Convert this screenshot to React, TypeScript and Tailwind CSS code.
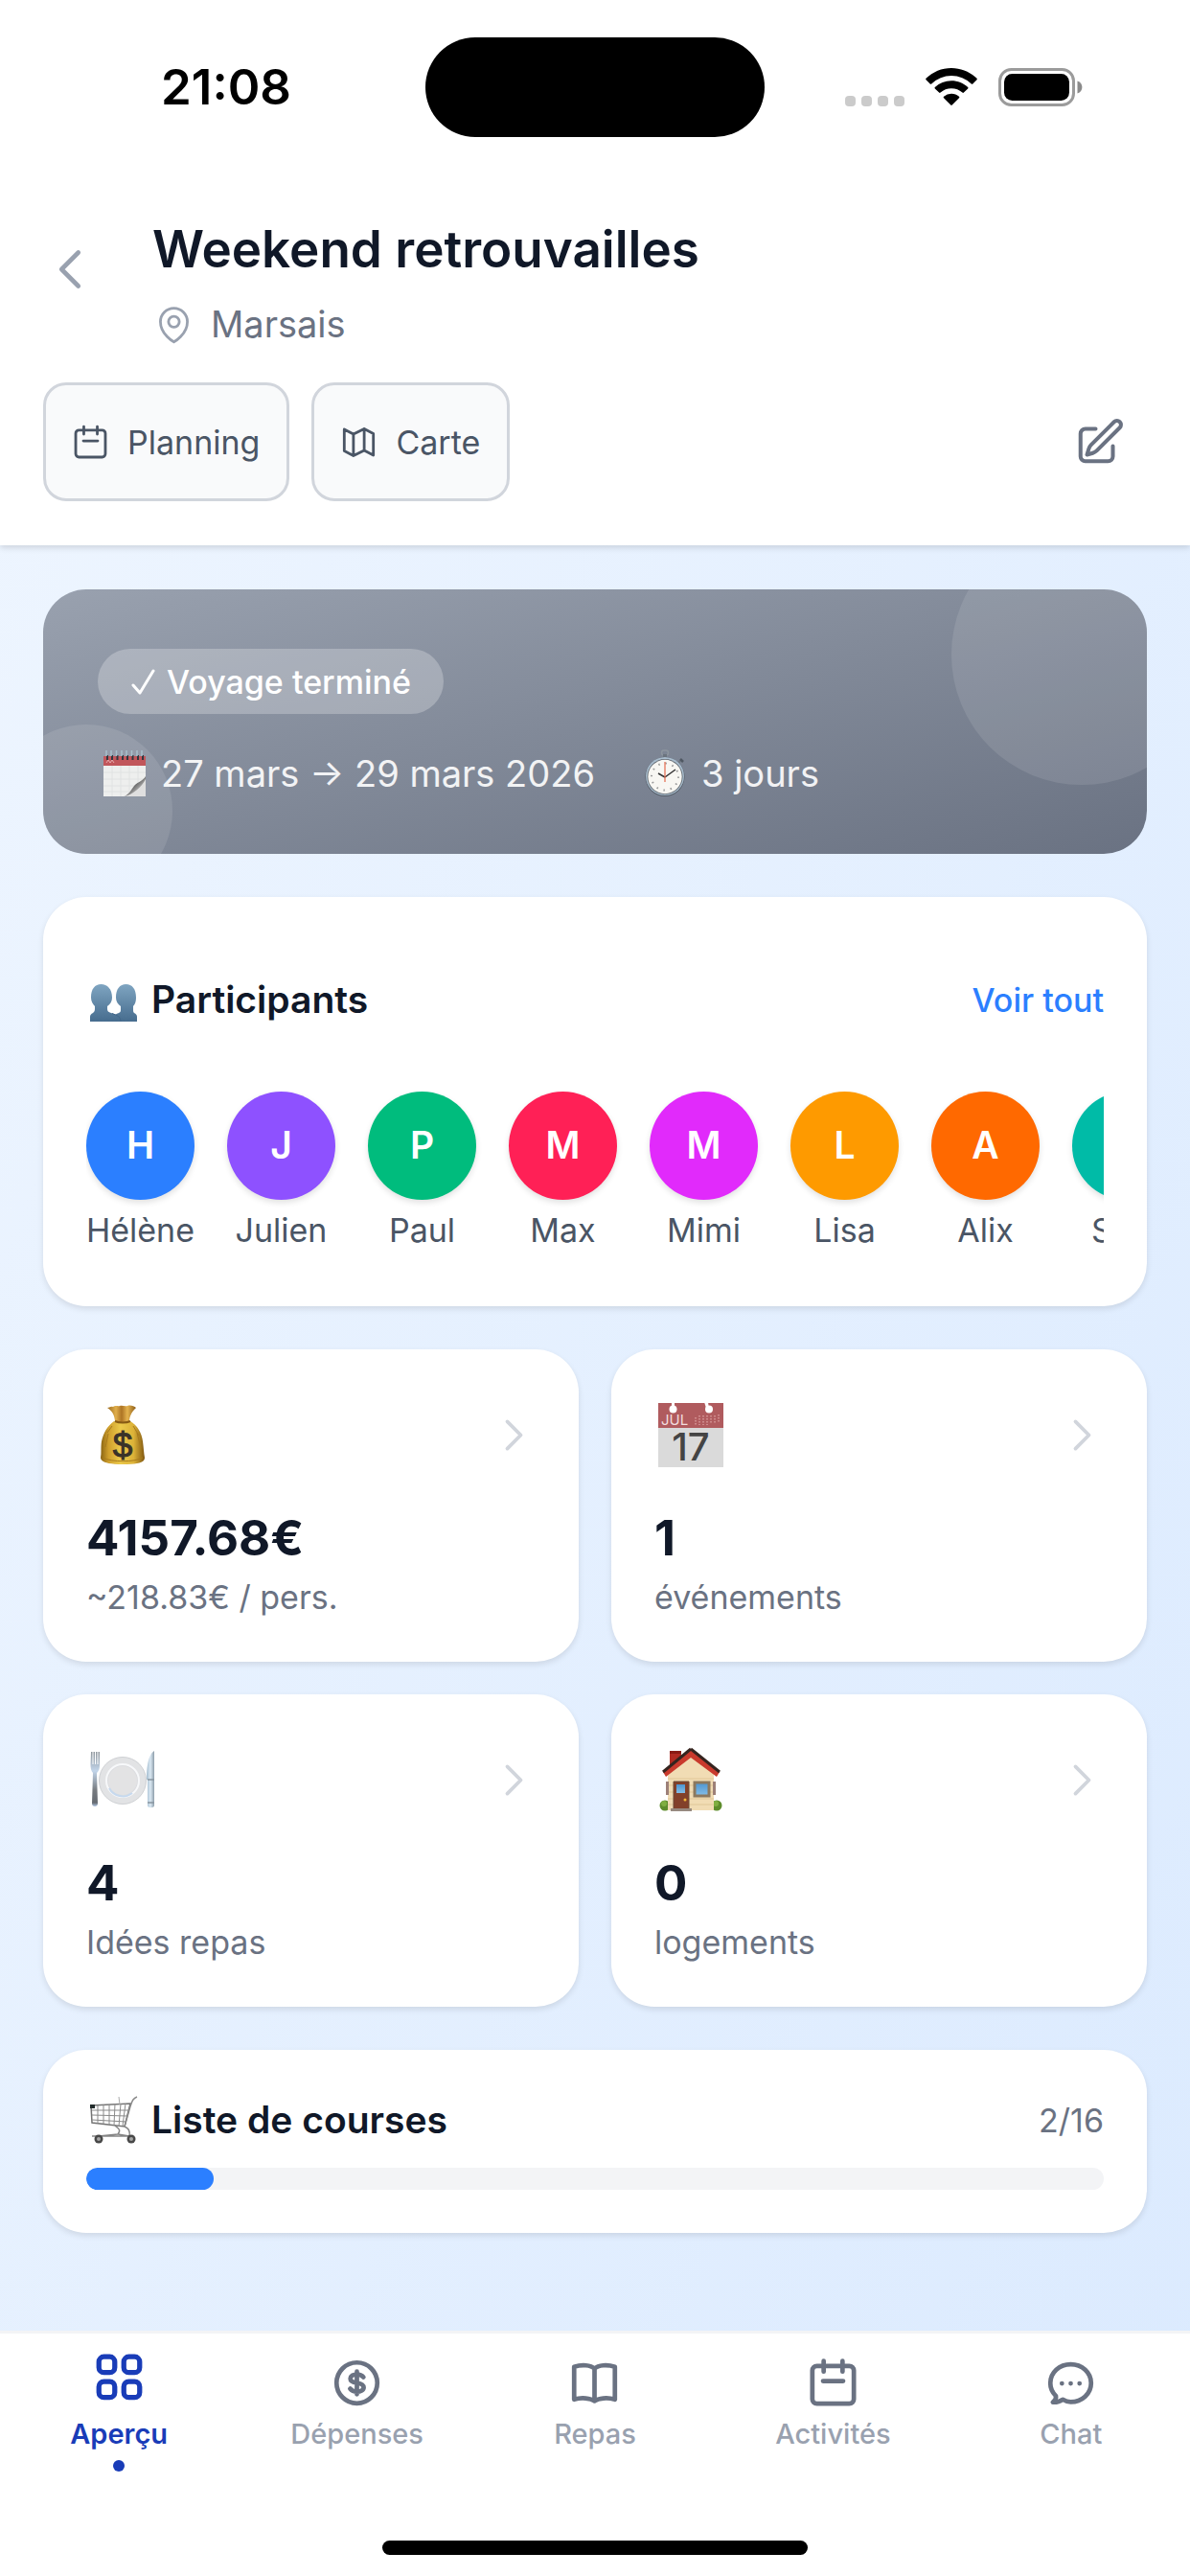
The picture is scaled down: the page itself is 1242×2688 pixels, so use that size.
import React from "react";

const participants = [
  { name: "Hélène", color: "bg-blue-500" },
  { name: "Julien", color: "bg-violet-500" },
  { name: "Paul", color: "bg-emerald-500" },
  { name: "Max", color: "bg-rose-500" },
  { name: "Mimi", color: "bg-fuchsia-500" },
  { name: "Lisa", color: "bg-amber-500" },
  { name: "Alix", color: "bg-orange-500" },
  { name: "Sara", color: "bg-teal-500" },
];

type IconProps = {
  className?: string;
  strokeWidth?: number;
  children?: React.ReactNode;
};

function Icon({ className, strokeWidth = 1.5, children }: IconProps) {
  return (
    <svg
      viewBox="0 0 24 24"
      fill="none"
      stroke="currentColor"
      strokeWidth={strokeWidth}
      strokeLinecap="round"
      strokeLinejoin="round"
      className={className}
      aria-hidden="true"
    >
      {children}
    </svg>
  );
}

function ChevronRight() {
  return (
    <Icon className="size-[45px] text-gray-300" strokeWidth={2}>
      <path d="m8.25 4.5 7.5 7.5-7.5 7.5" />
    </Icon>
  );
}

function CalendarPath() {
  return (
    <>
      <rect x="3.75" y="5.25" width="16.5" height="15" rx="1.8" />
      <path d="M8.25 3.3v4.2M15.75 3.3v4.2M8 11.25h8" />
    </>
  );
}

function StatusIcons() {
  return (
    <div className="flex items-center gap-[22px] pl-[84px]">
      <svg viewBox="0 0 62 40" className="h-10 w-[62px]" fill="#cbcbcb" aria-hidden="true">
        <rect x="0" y="29" width="11" height="11" rx="4" />
        <rect x="17" y="29" width="11" height="11" rx="4" />
        <rect x="34" y="29" width="11" height="11" rx="4" />
        <rect x="51" y="29" width="11" height="11" rx="4" />
      </svg>
      <svg viewBox="0 0 54 40" className="h-10 w-[54px]" aria-hidden="true">
        <path d="M27 0C37 0 46.500 4 53.500 10.800q.6.700 0 1.400l-4.200 4.200q-.8.700-1.500 0A30 30 0 0 0 6.200 16.400q-.7.700-1.500 0L.5 12.200q-.6-.7 0-1.400C7.500 4 17 0 27 0z" />
        <path d="M27 13.300c6.600 0 12.600 2.500 17.200 6.700q.7.700 0 1.400l-4.300 4.200q-.7.700-1.500 0a17 17 0 0 0-22.800 0q-.8.700-1.500 0l-4.300-4.200q-.7-.7 0-1.400A25.300 25.300 0 0 1 27 13.300z" />
        <path d="M27 26.700c3 0 5.800 1.100 8 3q.8.700 0 1.500l-7.300 7.400q-.7.700-1.400 0L19 31.200q-.8-.8 0-1.500a12.300 12.300 0 0 1 8-3z" />
      </svg>
      <svg viewBox="0 0 88 40" className="h-10 w-[88px]" aria-hidden="true">
        <rect x="1.500" y="1.500" width="77" height="37" rx="12" fill="none" stroke="#9b9b9b" strokeWidth="3" />
        <rect x="6" y="6" width="68" height="28" rx="8.500" />
        <path d="M82.500 13.500c6.500 2 6.500 11 0 13z" fill="#8a8a8a" />
      </svg>
    </div>
  );
}

function SpiralCalendar() {
  return (
    <svg viewBox="0 0 48 50" className="mx-1 h-[50px] w-12" aria-hidden="true">
      <defs>
        <linearGradient id="pageCurl" x1="0" y1="0" x2="1" y2="1">
          <stop offset="0.4" stopColor="#555" />
          <stop offset="0.75" stopColor="#c9c9c9" />
        </linearGradient>
      </defs>
      <path d="M2 17h44v32H2z" fill="#eeefee" />
      <path d="M2 7h44v10H2z" fill="#c1565b" />
      <path d="M5 14l2-3 2 3 2-3 2 3" stroke="#e6aaaa" fill="none" />
      <g stroke="#e0e2e2" strokeWidth="1">
        <path d="M2 24h44M2 31h44M2 38h44M2 44h44M11 17v32M20 17v32M29 17v32M38 17v32" />
      </g>
      <path d="M46 29c-4 6-7 6-11 8-4 3-5 9-12 12h23z" fill="#dfdfdf" />
      <path d="M46 28c-3 5-8 6-11 9s-5 9-11 12c9-2 18-10 22-18z" fill="url(#pageCurl)" />
      <g stroke="#33383f" strokeWidth="2">
        <path d="M6 6v5M11 6v5M16.500 6v5M22 6v5M27 6v5M32.500 6v5M38 6v5M43 6v5" />
      </g>
      <g stroke="#a9c0cc" strokeWidth="1.500">
        <path d="M5 1v6M10 1v6M15.500 1v6M21 1v6M26 1v6M31.500 1v6M37 1v6M42 1v6" />
      </g>
    </svg>
  );
}

function Stopwatch() {
  return (
    <svg viewBox="0 0 48 50" className="mx-1 h-[50px] w-12" aria-hidden="true">
      <rect x="20.500" y="1" width="7" height="5" rx="2.500" fill="none" stroke="#8d959e" strokeWidth="1.500" />
      <path d="M22 5h4v4h-4z" fill="#6b747e" />
      <path d="m37 15 4-4" stroke="#6f7781" strokeWidth="2" />
      <path d="m40 10 3 3" stroke="#505862" strokeWidth="2.500" />
      <circle cx="24" cy="28.500" r="20.500" fill="#505862" />
      <circle cx="24" cy="28" r="20" fill="#a8bccd" />
      <circle cx="24" cy="28.500" r="18.500" fill="#5d646b" />
      <circle cx="24" cy="28.500" r="17.700" fill="#f8f7f3" />
      <circle cx="24" cy="28.500" r="14" fill="none" stroke="#9a9a9a" strokeWidth="2" strokeDasharray="1.500 5.830" />
      <path d="m24 29 11-8M24 29l-7-4" stroke="#333" strokeWidth="1.500" />
      <path d="M24 34V13" stroke="#e5684c" strokeWidth="1.200" />
    </svg>
  );
}

function People() {
  return (
    <svg viewBox="0 -9 50 50" className="mx-1 size-[50px]" aria-hidden="true">
      <defs>
        <linearGradient id="bust" x1="0" y1="0" x2="0" y2="1">
          <stop offset="0" stopColor="#7fa5c1" />
          <stop offset="1" stopColor="#466c8e" />
        </linearGradient>
      </defs>
      <path
        d="M25 39V34c0-2 2-3 5-4 2-1 2-2 2-4v-3c-3-2-5-5-5-9C27 5 31 0 37.500 0S48 5 48 14c0 4-1 7-3 9v3c0 2 0 3 1 4 2 1 3 2 3 4v5z"
        fill="url(#bust)"
      />
      <path
        d="M0 39v-5c0-2 1-3 3-4 1-1 2-2 2-4v-3c-2-2-4-5-4-9C1 5 5 0 11.500 0S23 5 23 14c0 4-2 7-5 9v3c0 2 1 3 4 4 6 2 10 3 10 9z"
        fill="url(#bust)"
      />
      <path d="M23 30.500c5 2 9 3 9 8.500" stroke="#42678a" fill="none" />
    </svg>
  );
}

function MoneyBag() {
  return (
    <svg viewBox="4 0 68 68" className="mx-1 size-[68px]" aria-hidden="true">
      <defs>
        <linearGradient id="bag" x1="0" y1="0" x2="1" y2="0">
          <stop offset="0" stopColor="#8a6413" />
          <stop offset="0.18" stopColor="#cf9f2c" />
          <stop offset="0.45" stopColor="#ecca4b" />
          <stop offset="0.75" stopColor="#dcb238" />
          <stop offset="1" stopColor="#805710" />
        </linearGradient>
        <linearGradient id="bagNeck" x1="0" y1="0" x2="1" y2="0">
          <stop offset="0" stopColor="#9a6a1d" />
          <stop offset="0.3" stopColor="#e0ae4b" />
          <stop offset="0.5" stopColor="#ad7424" />
          <stop offset="0.7" stopColor="#e5b44f" />
          <stop offset="1" stopColor="#8b5b18" />
        </linearGradient>
      </defs>
      <path d="M22 6c2 0 3-2 6-1 3-2 5 0 7-1 3-1 5 1 8 0 3-1 7 0 9 2-5 5-7 9-7 15H30C30 14 27 9 22 6z" fill="url(#bagNeck)" />
      <path
        d="M29 20c4 2 13 2 17 0 7 4 12 12 13 21 1 7 1 12 2 17 0 5-6 7-23 7s-23-3-23-7c1-5 0-10 1-17 2-9 6-16 13-21z"
        fill="url(#bag)"
      />
      <path d="M30 20c4 2 12 2 16 0" stroke="#875b14" strokeWidth="2" fill="none" />
      <path d="M17 58c10 5 33 5 42 0M23 33l-3 14M27 25l-5 7M53 32l4 16M49 25l6 10" stroke="#a87b1d" strokeWidth="1" fill="none" />
      <text x="38" y="58" textAnchor="middle" fontFamily="Liberation Sans" fontSize="37" fill="#3a3329" stroke="#3a3329">
        $
      </text>
    </svg>
  );
}

function TearOffCalendar() {
  return (
    <svg viewBox="0 0 68 68" className="mx-1 size-[68px]" aria-hidden="true">
      <path d="M0 1h68v27H0z" fill="#b05b5e" />
      <path d="M0 27h68v41H0z" fill="#dadada" />
      <path d="M14 0h3v6h-3zM48 0l4 0 1 7-3-1z" fill="#fff" />
      <circle cx="15.500" cy="7.500" r="4" fill="#fff" />
      <circle cx="53" cy="7.500" r="4" fill="#fff" />
      <text x="3" y="24" fontFamily="Inter" fontSize="15" fill="#f2dddd">
        JUL
      </text>
      <g stroke="#d79a9b" strokeWidth="1.500" strokeDasharray="1.500 1.500">
        <path d="M39 16v8M43 14v10M47 14v10M51 14v10M55 14v8M59 14v8M63 13v8" />
      </g>
      <text x="34" y="61" textAnchor="middle" fontFamily="Inter" fontSize="40" fontWeight="500" fill="#444">
        17
      </text>
    </svg>
  );
}

function Plate() {
  return (
    <svg viewBox="0 0 68 68" className="mx-1 size-[68px]" aria-hidden="true">
      <defs>
        <linearGradient id="steel" x1="0" y1="0" x2="0" y2="1">
          <stop offset="0" stopColor="#8f969c" />
          <stop offset="0.35" stopColor="#c2d5ea" />
          <stop offset="0.7" stopColor="#777b80" />
          <stop offset="0.93" stopColor="#666b72" />
          <stop offset="1" stopColor="#b5c9e6" />
        </linearGradient>
        <linearGradient id="blade" x1="0" y1="0" x2="1" y2="0">
          <stop offset="0" stopColor="#a5bdd0" />
          <stop offset="0.5" stopColor="#dbe9f3" />
          <stop offset="1" stopColor="#8d9daa" />
        </linearGradient>
      </defs>
      <circle cx="34" cy="35" r="24.500" fill="#e2e3e5" stroke="#cfd1d4" />
      <circle cx="34" cy="35" r="17" fill="#dcdde0" stroke="#f7f8fa" strokeWidth="2" />
      <circle cx="34" cy="35" r="15" fill="#e3e3e4" />
      <path d="M20 43a16 16 0 0 0 24 5" stroke="#c6d9ee" strokeWidth="2" fill="none" />
      <path d="M1 5h1.500v13h1V5H5v13h1V5h1.500v13h1V5H10v13c0 5-1 7-3 9l1 32c0 4-6 4-6 0l1-32c-2-2-2.500-5-2.500-9z" fill="url(#steel)" />
      <path d="M67 4v57c0 3-7 3-7 0V34h-1C59 24 60 8 67 4z" fill="url(#blade)" />
      <path d="M60 34h7M60 58h7" stroke="#8895a0" strokeWidth="1.500" />
    </svg>
  );
}

function House() {
  return (
    <svg viewBox="0 0 68 68" className="mx-1 size-[68px]" aria-hidden="true">
      <defs>
        <linearGradient id="glass" x1="0" y1="0" x2="0" y2="1">
          <stop offset="0" stopColor="#4c94d0" />
          <stop offset="1" stopColor="#86bee6" />
        </linearGradient>
      </defs>
      <circle cx="7" cy="61" r="5.500" fill="#5d8c2b" />
      <circle cx="61" cy="61" r="5.500" fill="#5d8c2b" />
      <circle cx="6" cy="59" r="3" fill="#7fae41" />
      <circle cx="60" cy="59" r="3" fill="#7fae41" />
      <path d="M12 4h12v18H12z" fill="#b02a21" />
      <path d="M12 4h12v3H12z" fill="#8a1b14" />
      <path d="M10 26 34 8l24 19v39H10z" fill="#f1dcb4" />
      <path d="M10 33h48M10 40h48M10 47h48M10 54h48M10 60h48" stroke="#e0c697" strokeWidth="1" />
      <path d="M8 36h3v14H8zM57 36h3v14h-3z" fill="#9d8078" />
      <path d="M34 3 5 26l3 5 26-20 27 20 3-5z" fill="#c93a2d" />
      <path d="M34 2 5 26" stroke="#35241f" strokeWidth="3" />
      <path d="M34 2 64 26" stroke="#35241f" strokeWidth="3" />
      <path d="M16 36h16v29H16z" fill="#82402a" stroke="#6b4a36" />
      <path d="M19 39h9v9h-9z" fill="url(#glass)" />
      <circle cx="28" cy="55" r="1.500" fill="#f2b83b" />
      <path d="M38 37h15v14H38z" fill="url(#glass)" stroke="#8c785d" strokeWidth="3" />
      <path d="M13 64h22v3H13z" fill="#978a80" />
    </svg>
  );
}

function Cart() {
  return (
    <svg viewBox="0 0 50 50" className="mx-1 size-[50px]" fill="none" aria-hidden="true">
      <path d="M1 10 42 8l-6 24L2 28z" stroke="#747474" strokeWidth="1.500" />
      <path d="M8 10v19M14 9v20M20 9v21M26 8l-1 23M32 8l-2 24M37 8l-3 23M2 15h38M2 20l37 1M2 25l36 2" stroke="#8a8a8a" strokeWidth="1" />
      <path d="M31 9 30 1" stroke="#aaa" />
      <path d="M49 1c-5 2-5 5-7 10l-6 21" stroke="#8a8a8a" strokeWidth="1.500" />
      <path d="M26 31c5 4 6 5 3 9l12 2M36 32c4 2 6 4 5 10L2 42M29 40 9 42" stroke="#868686" strokeWidth="1.500" />
      <path d="M0 9h5v4H0z" fill="#222c2b" />
      <circle cx="9" cy="45" r="4.500" fill="#484848" />
      <circle cx="9" cy="45" r="2" fill="#a5a5a5" />
      <circle cx="43" cy="45" r="4.500" fill="#484848" />
      <circle cx="43" cy="45" r="2" fill="#a5a5a5" />
    </svg>
  );
}

const stats = [
  { icon: <MoneyBag />, value: "4157.68€", label: "~218.83€ / pers." },
  { icon: <TearOffCalendar />, value: "1", label: "événements" },
  { icon: <Plate />, value: "4", label: "Idées repas" },
  { icon: <House />, value: "0", label: "logements" },
];

const tabs = [
  {
    label: "Aperçu",
    active: true,
    icon: (
      <>
        <rect x="3.900" y="1.600" width="6.300" height="6.300" rx="2" />
        <rect x="13.800" y="1.600" width="6.300" height="6.300" rx="2" />
        <rect x="3.900" y="11.500" width="6.300" height="6.300" rx="2" />
        <rect x="13.800" y="11.500" width="6.300" height="6.300" rx="2" />
      </>
    ),
  },
  {
    label: "Dépenses",
    icon: (
      <>
        <circle cx="12" cy="12" r="8.100" />
        <path d="M12 7.500v9M14.600 9.700c-.6-.7-1.500-1.100-2.600-1.100-1.500 0-2.600.7-2.600 1.700s.9 1.500 2.600 1.700c1.700.3 2.700.8 2.700 1.800s-1.200 1.700-2.700 1.700c-1.200 0-2.100-.4-2.700-1.200" />
      </>
    ),
  },
  {
    label: "Repas",
    icon: (
      <path d="M12 6.300C10.500 4.900 7 4.600 3.900 5.600v13c3-1 6.600-.5 8.100.6 1.500-1.100 5.100-1.600 8.100-.6v-13C17 4.600 13.500 4.900 12 6.300zm0 0v12.900" />
    ),
  },
  {
    label: "Activités",
    icon: <CalendarPath />,
  },
  {
    label: "Chat",
    icon: (
      <>
        <path d="M12 19.600c4.500 0 8.100-3.300 8.100-7.500S16.500 4.600 12 4.600s-8.100 3.300-8.100 7.500c0 2 .8 3.700 2.200 5.100.2.800-.3 1.700-1.200 2.500 1.400.1 2.800-.3 3.900-1.100 1 .6 2.100 1 3.200 1z" />
        <path d="M8.500 12.200h.01M12 12.200h.01M15.500 12.200h.01" />
      </>
    ),
  },
];

export default function App() {
  return (
    <div className="flex min-h-screen flex-col bg-linear-to-br from-blue-50 to-blue-100 font-['Inter',sans-serif] text-gray-900">
      <header className="relative bg-white shadow-[0_3px_6px_rgba(0,0,0,0.12)]">
        <div className="grid h-[182px] grid-cols-[1fr_354px_1fr] items-center">
          <span className="pl-7 text-center text-[51px] font-semibold text-black">21:08</span>
          <div className="h-[104px] rounded-full bg-black" />
          <StatusIcons />
        </div>
        <div className="px-[45px] pt-11 pb-[46px]">
          <div className="flex items-start gap-[58px]">
            <button type="button" aria-label="Retour" className="mt-[27px] text-gray-400">
              <Icon className="size-14" strokeWidth={2}>
                <path d="M15.750 19.500 8.250 12l7.500-7.500" />
              </Icon>
            </button>
            <div>
              <h1 className="text-[53px] leading-[68px] font-semibold">Weekend retrouvailles</h1>
              <p className="mt-4 flex items-center gap-4 text-[38px] leading-[56px] text-gray-500">
                <Icon className="size-[45px] text-gray-400">
                  <path d="M15 10.500a3 3 0 1 1-6 0 3 3 0 0 1 6 0Z" />
                  <path d="M19.500 10.500c0 7.142-7.500 11.250-7.500 11.250S4.500 17.642 4.500 10.500a7.500 7.500 0 1 1 15 0Z" />
                </Icon>
                Marsais
              </p>
            </div>
          </div>
          <div className="mt-[33px] flex items-center gap-[23px]">
            <button
              type="button"
              className="flex h-[124px] items-center gap-4 rounded-3xl border-3 border-gray-300 bg-gray-50 pr-7 pl-6 text-[34px] text-gray-600"
            >
              <Icon className="size-[45px]">
                <CalendarPath />
              </Icon>
              Planning
            </button>
            <button
              type="button"
              className="flex h-[124px] items-center gap-4 rounded-3xl border-3 border-gray-300 bg-gray-50 pr-7 pl-6 text-[34px] text-gray-600"
            >
              <Icon className="size-[45px]">
                <path d="M3.900 4.800 9 7.500l6-3 5.100 2.700v12L15 16.500l-6 3-5.100-2.700zM9 7.500v12M15 4.500v12" />
              </Icon>
              Carte
            </button>
            <button type="button" aria-label="Modifier" className="ml-auto p-[22px] text-gray-500">
              <Icon className="size-[54px]" strokeWidth={1.8}>
                <path d="m16.862 4.487 1.687-1.688a1.875 1.875 0 1 1 2.652 2.652L10.582 16.070a4.500 4.500 0 0 1-1.897 1.130L6 18l.8-2.685a4.500 4.500 0 0 1 1.130-1.897l8.932-8.931Z" />
                <path d="M18 14v4.750A2.250 2.250 0 0 1 15.750 21H5.250A2.250 2.250 0 0 1 3 18.750V8.250A2.250 2.250 0 0 1 5.250 6H10" />
              </Icon>
            </button>
          </div>
        </div>
      </header>

      <main className="flex flex-1 flex-col gap-[45px] px-[45px] pt-[46px] pb-[90px]">
        <section className="relative overflow-hidden rounded-[45px] bg-linear-to-br from-gray-400 to-gray-500 px-[57px] pt-[62px] pb-14 text-white">
          <div className="absolute -top-[68px] -right-[68px] size-[272px] rounded-full bg-white/10" />
          <div className="absolute -bottom-[45px] -left-[45px] size-[180px] rounded-full bg-white/10" />
          <div className="relative flex flex-col items-start gap-[34px]">
            <span className="flex h-[68px] items-center gap-[10px] rounded-full bg-white/25 px-[34px] text-[34px] font-medium">
              <svg viewBox="0 0 28 28" className="size-7" fill="none" stroke="currentColor" strokeWidth="3" strokeLinecap="round" strokeLinejoin="round" aria-hidden="true">
                <path d="m3 18 7 8L24 3" />
              </svg>
              Voyage terminé
            </span>
            <div className="flex gap-[45px] text-[38px] leading-[56px] text-white/90">
              <span className="flex items-center gap-[10px]">
                <SpiralCalendar />
                27 mars → 29 mars 2026
              </span>
              <span className="flex items-center gap-[10px]">
                <Stopwatch />3 jours
              </span>
            </div>
          </div>
        </section>

        <section className="rounded-[45px] bg-white px-[45px] pt-[79px] pb-[45px] shadow-[0_3px_6px_rgba(0,0,0,0.1)]">
          <div className="flex items-center justify-between">
            <h2 className="flex items-center gap-[10px] text-[39px] leading-[56px] font-semibold">
              <People />
              Participants
            </h2>
            <a href="#participants" className="text-[34px] font-medium text-blue-500">
              Voir tout
            </a>
          </div>
          <ul className="mt-[68px] flex gap-[34px] overflow-hidden pb-3">
            {participants.map((person) => (
              <li key={person.name} className="flex w-[113px] shrink-0 flex-col items-center gap-[10px]">
                <span
                  className={`flex size-[113px] items-center justify-center rounded-full text-[39px] font-semibold text-white shadow-[0_3px_6px_rgba(0,0,0,0.12)] ${person.color}`}
                >
                  {person.name[0]}
                </span>
                <span className="text-[34px] leading-[44px] text-gray-600">{person.name}</span>
              </li>
            ))}
          </ul>
        </section>

        <section className="grid grid-cols-2 gap-[34px]">
          {stats.map((stat) => (
            <a
              key={stat.label}
              href="#details"
              className="rounded-[45px] bg-white px-[45px] pt-[55px] pb-[45px] shadow-[0_3px_6px_rgba(0,0,0,0.1)]"
            >
              <div className="flex items-center justify-between">
                {stat.icon}
                <ChevronRight />
              </div>
              <p className="mt-11 text-[51px] leading-[60px] font-bold">{stat.value}</p>
              <p className="mt-[10px] text-[34px] leading-[44px] text-gray-500">{stat.label}</p>
            </a>
          ))}
        </section>

        <section className="rounded-[45px] bg-white px-[45px] py-[45px] shadow-[0_3px_6px_rgba(0,0,0,0.1)]">
          <div className="flex items-center justify-between">
            <h2 className="flex items-center gap-[10px] text-[39px] leading-[56px] font-semibold">
              <Cart />
              Liste de courses
            </h2>
            <span className="text-[34px] text-gray-500">2/16</span>
          </div>
          <div className="mt-[22px] h-[23px] overflow-hidden rounded-full bg-gray-100">
            <div className="h-full w-1/8 rounded-full bg-blue-500" />
          </div>
        </section>
      </main>

      <nav className="border-t-3 border-gray-100 bg-white">
        <div className="grid grid-cols-5 pt-5">
          {tabs.map((tab) => (
            <a
              key={tab.label}
              href="#tab"
              className={`flex flex-col items-center ${tab.active ? "text-blue-800" : "text-gray-500"}`}
            >
              <Icon className="size-[63px]" strokeWidth={tab.active ? 2 : 1.8}>
                {tab.icon}
              </Icon>
              <span
                className={`mt-1 text-[29px] leading-9 ${tab.active ? "font-semibold text-blue-800" : "font-medium text-gray-400"}`}
              >
                {tab.label}
              </span>
              {tab.active && <span className="mt-[9px] size-3 rounded-full bg-blue-800" />}
            </a>
          ))}
        </div>
        <div className="mx-auto mt-[72px] mb-[22px] h-[15px] w-[444px] rounded-full bg-black" />
      </nav>
    </div>
  );
}
